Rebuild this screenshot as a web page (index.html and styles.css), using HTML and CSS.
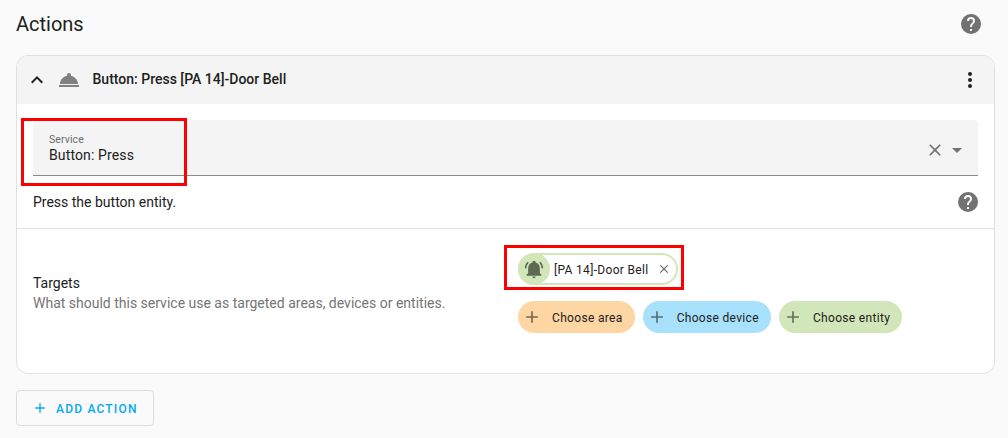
FILE: index.html
```html
<!DOCTYPE html>
<html lang="en">
<head>
<meta charset="utf-8">
<title>Actions</title>
<link rel="stylesheet" href="styles.css">
</head>
<body>
<svg class="defs" aria-hidden="true">
  <symbol id="help" viewBox="0 0 24 24"><path d="M15.07,11.25L14.17,12.17C13.45,12.89 13,13.5 13,15H11V14.5C11,13.39 11.45,12.39 12.17,11.67L13.41,10.41C13.78,10.05 14,9.55 14,9C14,7.89 13.1,7 12,7A2,2 0 0,0 10,9H8A4,4 0 0,1 12,5A4,4 0 0,1 16,9C16,9.88 15.64,10.67 15.07,11.25M13,19H11V17H13M12,2A10,10 0 0,0 2,12A10,10 0 0,0 12,22A10,10 0 0,0 22,12C22,6.47 17.5,2 12,2Z"/></symbol>
  <symbol id="close" viewBox="0 0 24 24"><path d="M19,6.41L17.59,5L12,10.59L6.41,5L5,6.41L10.59,12L5,17.59L6.41,19L12,13.41L17.59,19L19,17.59L13.41,12L19,6.41Z"/></symbol>
  <symbol id="plus" viewBox="0 0 24 24"><path d="M19,13H13V19H11V13H5V11H11V5H13V11H19V13Z"/></symbol>
</svg>
<main class="page">
  <header class="title-row">
    <h1 class="title">Actions</h1>
    <svg class="icon muted"><use href="#help"/></svg>
  </header>
  <section class="card">
    <div class="card-header">
      <svg class="icon" viewBox="0 0 24 24"><path d="M7.41,15.41L12,10.83L16.59,15.41L18,14L12,8L6,14L7.41,15.41Z"/></svg>
      <svg class="icon service-icon" viewBox="0 0 24 24"><path d="M12,5A2,2 0 0,1 14,7C14,7.24 13.96,7.47 13.88,7.69C17.95,8.5 21,11.91 21,16H3C3,11.91 6.05,8.5 10.12,7.69C10.04,7.47 10,7.24 10,7A2,2 0 0,1 12,5M22,19H2V17H22V19Z"/></svg>
      <h2 class="card-title">Button: Press [PA 14]-Door Bell</h2>
      <svg class="icon" viewBox="0 0 24 24"><path d="M12,16A2,2 0 0,1 14,18A2,2 0 0,1 12,20A2,2 0 0,1 10,18A2,2 0 0,1 12,16M12,10A2,2 0 0,1 14,12A2,2 0 0,1 12,14A2,2 0 0,1 10,12A2,2 0 0,1 12,10M12,4A2,2 0 0,1 14,6A2,2 0 0,1 12,8A2,2 0 0,1 10,6A2,2 0 0,1 12,4Z"/></svg>
    </div>
    <div class="field">
      <div class="field-text">
        <span class="field-label">Service</span>
        <span class="field-value">Button: Press</span>
      </div>
      <svg class="icon clear muted"><use href="#close"/></svg>
      <svg class="icon muted" viewBox="0 0 24 24"><path d="M7,10L12,15L17,10H7Z"/></svg>
      <div class="mark mark-service"></div>
    </div>
    <div class="description">
      <span>Press the button entity.</span>
      <svg class="icon muted"><use href="#help"/></svg>
    </div>
    <div class="targets">
      <div class="targets-text">
        <div>Targets</div>
        <div class="secondary">What should this service use as targeted areas, devices or entities.</div>
      </div>
      <div class="picker">
        <div class="chip selected">
          <span class="chip-badge"><svg class="bell" viewBox="0 0 24 24"><path d="M21,19V20H3V19L5,17V11C5,7.9 7.03,5.17 10,4.29C10,4.19 10,4.1 10,4A2,2 0 0,1 12,2A2,2 0 0,1 14,4C14,4.1 14,4.19 14,4.29C16.97,5.17 19,7.9 19,11V17L21,19M14,21A2,2 0 0,1 12,23A2,2 0 0,1 10,21M19.75,3.19L18.33,4.61C20.04,6.3 21,8.6 21,11H23C23,8.07 21.84,5.25 19.75,3.19M1,11H3C3,8.6 3.96,6.3 5.67,4.61L4.25,3.19C2.16,5.25 1,8.07 1,11Z"/></svg></span>
          <span class="chip-label selected-name">[PA 14]-Door Bell</span>
          <svg class="remove"><use href="#close"/></svg>
          <div class="mark mark-target"></div>
        </div>
        <div class="choices">
          <div class="chip area"><svg class="chip-plus"><use href="#plus"/></svg><span class="chip-label">Choose area</span></div>
          <div class="chip device"><svg class="chip-plus"><use href="#plus"/></svg><span class="chip-label">Choose device</span></div>
          <div class="chip entity"><svg class="chip-plus"><use href="#plus"/></svg><span class="chip-label">Choose entity</span></div>
        </div>
      </div>
    </div>
  </section>
  <button class="add"><svg class="add-plus"><use href="#plus"/></svg><span class="add-label">ADD ACTION</span></button>
</main>
</body>
</html>
```

FILE: styles.css
```css
* { box-sizing: border-box; }
body {
  margin: 0;
  height: 438px;
  overflow: hidden;
  background: #fafafa;
  color: #212121;
  font-family: Roboto, "Liberation Sans", sans-serif;
  font-size: 14px;
  line-height: 20px;
}
svg { display: block; flex: none; fill: currentColor; }
.defs { width: 0; height: 0; position: absolute; }
.icon { width: 24px; height: 24px; }
.muted { color: #727272; }
.page { padding: 0 13px 0 16px; }
.title-row {
  display: flex;
  align-items: center;
  justify-content: space-between;
  height: 55px;
  padding: 0 12px 7px 0;
}
.title { margin: 0; font-size: 20px; font-weight: 400; line-height: 28px; }
.card {
  height: 319px;
  border: 1px solid #e0e0e0;
  border-radius: 12px;
  background: #fff;
}
.card-header {
  display: flex;
  align-items: center;
  height: 48px;
  padding: 0 12px 0 8px;
  border-radius: 11px 11px 0 0;
  background: #f4f4f4;
}
.service-icon { margin-left: 8px; color: #808080; }
.card-title { flex: 1; margin: 0 0 0 11.5px; padding-bottom: 2px; font-size: 14px; font-weight: 500; }
.field {
  position: relative;
  display: flex;
  align-items: center;
  height: 56px;
  margin: 16px 16px 0;
  padding: 4px 9px 0 16px;
  border-bottom: 1px solid #8a8a8a;
  border-radius: 4px 4px 0 0;
  background: #f4f4f4;
}
.field-text { flex: 1; display: flex; flex-direction: column; }
.field-label { font-size: 10.5px; line-height: 12px; letter-spacing: .1px; color: #6b6b6b; }
.field-value { line-height: 18px; padding-bottom: 2px; letter-spacing: .13px; }
.clear { width: 20px; height: 20px; }
.mark { position: absolute; border: 3px solid #f00; }
.mark-service { left: -12px; top: -2px; width: 166px; height: 68px; }
.description {
  display: flex;
  align-items: center;
  justify-content: space-between;
  height: 53px;
  padding: 0 14px 0 16px;
  border-bottom: 1px solid #e0e0e0;
}
.targets { display: flex; height: 144px; }
.targets-text { width: 501px; padding: 44px 0 0 16px; }
.secondary { color: #757575; }
.picker { padding-top: 24px; }
.chip {
  display: flex;
  align-items: center;
  height: 32px;
  border-radius: 16px;
  font-size: 12px;
  letter-spacing: .32px;
}
.chip-label { padding-top: 1px; white-space: nowrap; }
.selected {
  position: relative;
  width: 160px;
  border: 2px solid #d2e7b9;
  background: #fff;
}
.chip-badge {
  display: flex;
  align-items: center;
  justify-content: center;
  width: 32px;
  height: 32px;
  margin-left: -2px;
  border-radius: 50%;
  background: #d2e7b9;
}
.bell { width: 20px; height: 20px; color: #5e6853; }
.selected-name { flex: 1; margin-left: 4px; }
.remove { width: 14px; height: 14px; margin-right: 5px; color: #666; }
.mark-target { left: -16px; top: -10px; width: 180px; height: 45px; }
.choices { display: flex; gap: 7.9px; margin-top: 16px; }
.choices .chip { padding: 0 12.2px 0 4px; }
.chip-plus { width: 20px; height: 20px; margin-right: 10px; opacity: .6; }
.area { background: #fed6a4; }
.device { background: #a8e1fb; }
.entity { background: #d2e7b9; }
.add {
  display: flex;
  align-items: center;
  width: 138px;
  height: 36px;
  margin-top: 16px;
  padding: 0 15px;
  border: 1px solid #dcdcdc;
  border-radius: 4px;
  background: transparent;
  color: #03a9f4;
  font: 500 12px/20px Roboto, "Liberation Sans", sans-serif;
  letter-spacing: 1.2px;
}
.add-plus { width: 16px; height: 16px; margin-right: 8px; }
.add-label { padding-top: 1px; }
```
